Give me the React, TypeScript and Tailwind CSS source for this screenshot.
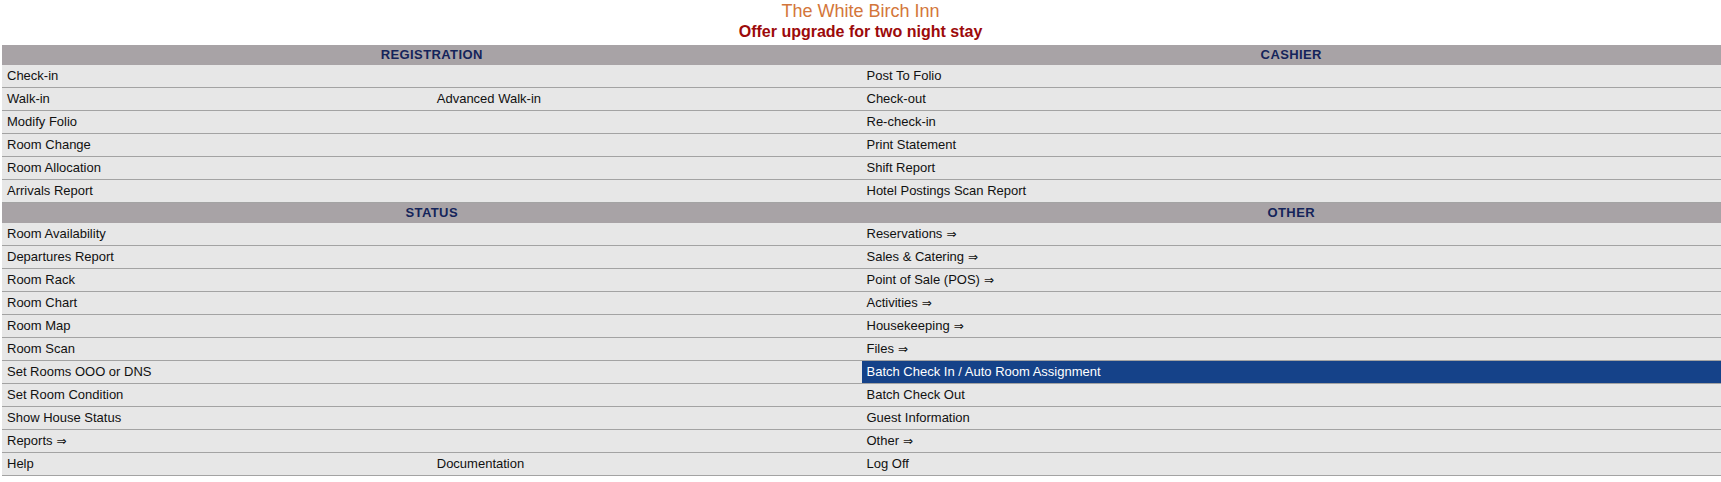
import React from "react"

type Cell = { label: string; more?: boolean; active?: boolean }
type Row = { a?: Cell; b?: Cell; c?: Cell }

const sections: { left: string; right: string; rows: Row[] }[] = [
  {
    left: "REGISTRATION",
    right: "CASHIER",
    rows: [
      { a: { label: "Check-in" }, c: { label: "Post To Folio" } },
      { a: { label: "Walk-in" }, b: { label: "Advanced Walk-in" }, c: { label: "Check-out" } },
      { a: { label: "Modify Folio" }, c: { label: "Re-check-in" } },
      { a: { label: "Room Change" }, c: { label: "Print Statement" } },
      { a: { label: "Room Allocation" }, c: { label: "Shift Report" } },
      { a: { label: "Arrivals Report" }, c: { label: "Hotel Postings Scan Report" } },
    ],
  },
  {
    left: "STATUS",
    right: "OTHER",
    rows: [
      { a: { label: "Room Availability" }, c: { label: "Reservations", more: true } },
      { a: { label: "Departures Report" }, c: { label: "Sales & Catering", more: true } },
      { a: { label: "Room Rack" }, c: { label: "Point of Sale (POS)", more: true } },
      { a: { label: "Room Chart" }, c: { label: "Activities", more: true } },
      { a: { label: "Room Map" }, c: { label: "Housekeeping", more: true } },
      { a: { label: "Room Scan" }, c: { label: "Files", more: true } },
      { a: { label: "Set Rooms OOO or DNS" }, c: { label: "Batch Check In / Auto Room Assignment", active: true } },
      { a: { label: "Set Room Condition" }, c: { label: "Batch Check Out" } },
      { a: { label: "Show House Status" }, c: { label: "Guest Information" } },
      { a: { label: "Reports", more: true }, c: { label: "Other", more: true } },
      { a: { label: "Help" }, b: { label: "Documentation" }, c: { label: "Log Off" } },
    ],
  },
]

function MenuCell({ cell, wide }: { cell?: Cell; wide?: boolean }) {
  const base = wide ? "col-span-2" : ""
  if (!cell) return <div className={base} />
  return (
    <div
      className={`${base} flex h-[22px] items-center px-[5px] cursor-pointer ${
        cell.active ? "bg-[#154289] text-white" : "text-[#111]"
      }`}
    >
      {cell.label}
      {cell.more && (
        <span className="ml-[4px] text-[12px] font-['DejaVu_Sans',sans-serif]">⇒</span>
      )}
    </div>
  )
}

export default function App() {
  return (
    <div className="min-h-screen bg-white font-['Liberation_Sans',Arial,sans-serif]">
      <div className="text-center pt-[1px]">
        <div className="text-[18px] leading-[21px] text-[#d3763a]">The White Birch Inn</div>
        <div className="text-[16px] leading-[20px] font-bold text-[#9c0a0a]">Offer upgrade for two night stay</div>
      </div>

      <div className="mt-[3px] pl-[2px]">
        {sections.map((s) => (
          <div key={s.left}>
            <div className="grid grid-cols-2 h-[20px] bg-[#a8a3a6] text-[13px] font-bold tracking-[0.4px] text-[#14245a]">
              <div className="flex items-center justify-center">{s.left}</div>
              <div className="flex items-center justify-center">{s.right}</div>
            </div>
            {s.rows.map((r, i) => (
              <div key={i} className="grid grid-cols-4 bg-[#e7e7e7] border-b border-[#a3a3a3] text-[13px]">
                <MenuCell cell={r.a} />
                <MenuCell cell={r.b} />
                <MenuCell cell={r.c} wide />
              </div>
            ))}
          </div>
        ))}
      </div>
    </div>
  )
}
